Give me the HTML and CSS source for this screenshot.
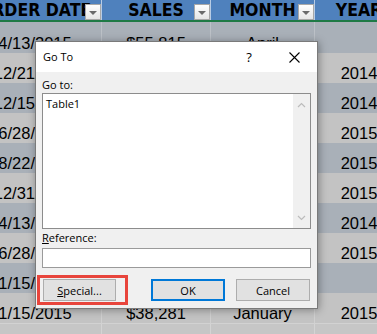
FILE: index.html
```html
<!DOCTYPE html>
<html lang="en">
<head>
    <meta charset="UTF-8">
    <meta name="viewport" content="width=device-width, initial-scale=1.0">
    <title>Go To</title>
    <link rel="stylesheet" href="styles.css">
</head>
<body>
    <div class="sheet">
        <div class="grid">
            <div class="row head">
                <div class="cell"><span>ORDER DATE</span><i class="filter"></i></div>
                <div class="cell"><span>SALES</span><i class="filter"></i></div>
                <div class="cell"><span>MONTH</span><i class="filter"></i></div>
                <div class="cell"><span>YEAR</span><i class="filter"></i></div>
            </div>
            <div class="row dark first">
                <div class="cell">4/13/2015</div><div class="cell">$55,815</div><div class="cell">April</div><div class="cell"></div>
            </div>
            <!-- rows 2-9: sales and month sit under the dialog -->
            <div class="row light">
                <div class="cell">12/21/2014</div><div class="cell"></div><div class="cell"></div><div class="cell">2014</div>
            </div>
            <div class="row dark">
                <div class="cell">12/15/2014</div><div class="cell"></div><div class="cell"></div><div class="cell">2014</div>
            </div>
            <div class="row light">
                <div class="cell">6/28/2015</div><div class="cell"></div><div class="cell"></div><div class="cell">2015</div>
            </div>
            <div class="row dark">
                <div class="cell">8/22/2015</div><div class="cell"></div><div class="cell"></div><div class="cell">2015</div>
            </div>
            <div class="row light">
                <div class="cell">12/31/2014</div><div class="cell"></div><div class="cell"></div><div class="cell">2015</div>
            </div>
            <div class="row dark">
                <div class="cell">4/13/2015</div><div class="cell"></div><div class="cell"></div><div class="cell">2014</div>
            </div>
            <div class="row light">
                <div class="cell">6/28/2015</div><div class="cell"></div><div class="cell"></div><div class="cell">2015</div>
            </div>
            <div class="row dark">
                <div class="cell">1/15/2015</div><div class="cell"></div><div class="cell"></div><div class="cell"></div>
            </div>
            <div class="row light">
                <div class="cell">1/15/2015</div><div class="cell">$38,281</div><div class="cell">January</div><div class="cell">2015</div>
            </div>
            <div class="row blank">
                <div class="cell"></div><div class="cell"></div><div class="cell"></div><div class="cell"></div>
            </div>
        </div>

        <div class="dialog">
            <div class="dialog-title">
                <span class="title-text">Go To</span>
                <span class="title-btn help">?</span>
                <span class="title-btn close">
                    <svg width="11" height="11" viewBox="0 0 11 11"><path d="M0.5 0.5L10.5 10.5M10.5 0.5L0.5 10.5" stroke="#000" stroke-width="1.1" fill="none"/></svg>
                </span>
            </div>
            <div class="dialog-body">
                <div class="label">Go to:</div>
                <div class="listbox">
                    <div class="list-items">Table1</div>
                    <div class="scrollbar">
                        <svg width="9" height="6" viewBox="0 0 9 6"><path d="M1 5L4.5 1.5L8 5" stroke="#bcbcbc" stroke-width="1.2" fill="none"/></svg>
                        <svg width="9" height="6" viewBox="0 0 9 6"><path d="M1 1L4.5 4.5L8 1" stroke="#bcbcbc" stroke-width="1.2" fill="none"/></svg>
                    </div>
                </div>
                <div class="label ref-label"><u>R</u>eference:</div>
                <div class="textbox"></div>
                <div class="buttons">
                    <button class="btn special"><u>S</u>pecial...</button>
                    <div class="btn-group">
                        <button class="btn default">OK</button>
                        <button class="btn">Cancel</button>
                    </div>
                </div>
            </div>
            <div class="highlight"></div>
        </div>
    </div>
</body>
</html>
```

FILE: styles.css
```css
/* Page */
body {
    margin: 0;
    background: #c2c2c2;
}

.sheet {
    position: relative;
    width: 377px;
    height: 334px;
    overflow: hidden;
    background: #c4c4c4;
    font-family: "Liberation Sans", Arial, sans-serif;
}

/* Spreadsheet behind the dialog */
.grid {
    margin-left: -31px;
    width: 440px;
}

.row {
    display: grid;
    grid-template-columns: 133px 109px 104px 89px;
    height: 30px;
}

.row .cell {
    box-sizing: border-box;
    border-right: 1px solid rgba(255, 255, 255, 0.22);
    display: flex;
    align-items: flex-end;
    justify-content: center;
    font-size: 16.5px;
    line-height: 20px;
    color: #000;
    white-space: nowrap;
    overflow: hidden;
}

.row.first {
    height: 31px;
}

.dark {
    background: #a9b0b8;
}

.light {
    background: #c3c3c3;
}

.blank {
    background: #c6c6c6;
    border-top: 1px solid #d2d2d2;
}

.blank .cell {
    border-right-color: #d4d4d4;
}

.head {
    height: 20px;
    background: #4f81bd;
    border-bottom: 2px solid #1f7a45;
}

.head .cell {
    position: relative;
    align-items: center;
    font-family: "Liberation Sans Narrow", "DejaVu Sans Condensed", "Liberation Sans", sans-serif;
    font-weight: bold;
    font-size: 17.5px;
    line-height: 20px;
    border-right-color: rgba(255, 255, 255, 0.6);
    overflow: visible;
}

.filter {
    position: absolute;
    right: 0;
    top: 4px;
    width: 16px;
    height: 16px;
    box-sizing: border-box;
    background: linear-gradient(#fefefe, #e6e6e6);
    border: 1px solid #a8a8a8;
    display: flex;
    align-items: center;
    justify-content: center;
}

.filter::after {
    content: "";
    border-top: 4px solid #6a6a6a;
    border-left: 4px solid transparent;
    border-right: 4px solid transparent;
    margin-top: 1px;
}

/* Dialog */
.dialog {
    position: absolute;
    left: 35px;
    top: 41px;
    width: 283px;
    height: 268px;
    box-sizing: border-box;
    border: 1px solid #7a7a7a;
    background: #f0f0f0;
    box-shadow: 1px 1px 8px rgba(0, 0, 0, 0.35);
    font-family: "Open Sans", "Noto Sans", sans-serif;
    font-size: 11px;
    color: #000;
    display: flex;
    flex-direction: column;
}

.dialog-title {
    height: 30px;
    background: #fff;
    display: flex;
    align-items: center;
    padding-left: 7px;
    line-height: 30px;
}

.title-text {
    flex: 1;
}

.title-btn {
    width: 46px;
    height: 30px;
    display: flex;
    align-items: center;
    justify-content: center;
}

.help {
    font-size: 13px;
    margin-right: -1px;
}

.dialog-body {
    flex: 1;
    padding: 6px 6px 0 6px;
    display: flex;
    flex-direction: column;
}

.label {
    line-height: 14px;
    height: 14px;
    margin-bottom: 1px;
}

.ref-label {
    margin-top: 2px;
    margin-bottom: 3px;
}

.listbox {
    height: 136px;
    box-sizing: border-box;
    border: 1px solid #8c8c8c;
    background: #fff;
    display: flex;
}

.list-items {
    flex: 1;
    padding: 3px 3px;
    line-height: 14px;
}

.scrollbar {
    width: 17px;
    background: #f0f0f0;
    display: flex;
    flex-direction: column;
    justify-content: space-between;
    align-items: center;
    padding: 8px 0 7px;
}

.textbox {
    height: 20px;
    box-sizing: border-box;
    border: 1px solid #9a9a9a;
    background: #fff;
}

.buttons {
    margin-top: 11px;
    display: flex;
    justify-content: space-between;
    padding: 0 1px;
}

.btn-group {
    display: flex;
    gap: 11px;
}

.btn {
    width: 74px;
    height: 22px;
    box-sizing: border-box;
    border: 1px solid #adadad;
    background: #e1e1e1;
    font-family: inherit;
    font-size: 11px;
    color: #000;
    padding: 0;
}

.btn.special {
    width: 73px;
}

.btn.default {
    border: 2px solid #0078d7;
}

/* Red annotation box round the Special button */
.highlight {
    position: absolute;
    left: 1px;
    top: 233px;
    width: 91px;
    height: 30px;
    box-sizing: border-box;
    border: 3px solid #e8453c;
}
```
